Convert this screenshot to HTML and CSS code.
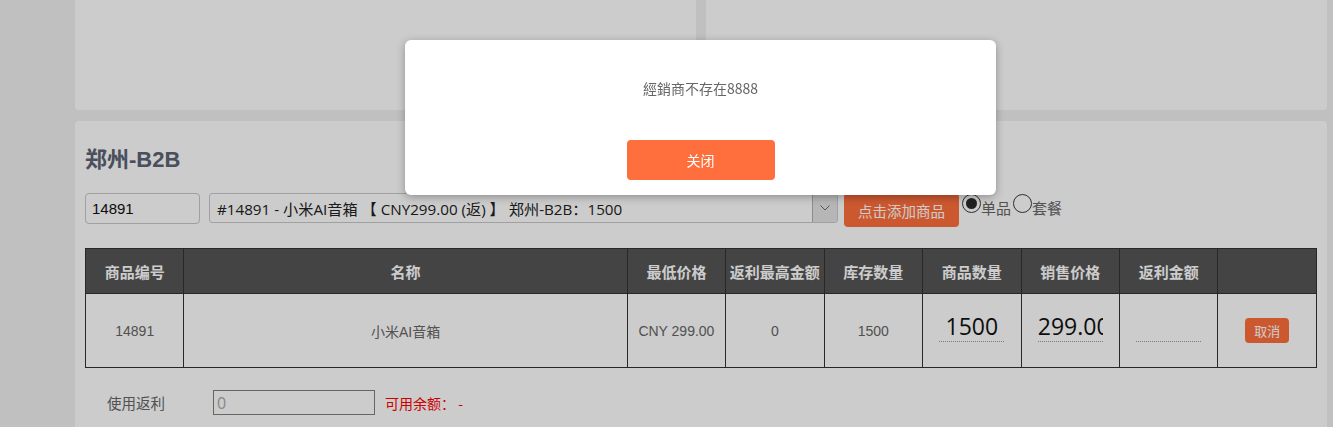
FILE: index.html
```html
<!DOCTYPE html>
<html lang="zh-CN">
<head>
<meta charset="utf-8">
<title>郑州-B2B</title>
<link rel="stylesheet" href="styles.css">
</head>
<body>
<div class="page">
  <div class="top-grid">
    <div class="panel top-panel"></div>
    <div class="panel top-panel"></div>
  </div>
  <div class="panel main-panel">
    <h2 class="title">郑州-B2B</h2>
    <div class="controls">
      <input class="code-input" type="text" value="14891">
      <div class="select">
        <span class="select-text">#14891 - 小米AI音箱 【 CNY299.00 (返) 】 郑州-B2B：1500</span>
        <span class="select-arrow"><svg width="10" height="6" viewBox="0 0 10 6"><polyline points="0.5,0.5 5,5 9.5,0.5" fill="none" stroke="#6a6a6a" stroke-width="1"/></svg></span>
      </div>
      <button class="btn add-btn" type="button">点击添加商品</button>
      <label class="radio"><span class="radio-dot checked"></span><span class="radio-text">单品</span></label>
      <label class="radio"><span class="radio-dot"></span><span class="radio-text">套餐</span></label>
    </div>
    <table class="goods">
      <colgroup>
        <col class="c8"><col class="c36"><col class="c8"><col class="c8"><col class="c8"><col class="c8"><col class="c8"><col class="c8"><col class="c8">
      </colgroup>
      <thead>
        <tr>
          <th>商品编号</th><th>名称</th><th>最低价格</th><th>返利最高金额</th><th>库存数量</th><th>商品数量</th><th>销售价格</th><th>返利金额</th><th></th>
        </tr>
      </thead>
      <tbody>
        <tr>
          <td>14891</td>
          <td>小米AI音箱</td>
          <td>CNY 299.00</td>
          <td>0</td>
          <td>1500</td>
          <td><input class="cell-input" type="text" value="1500"></td>
          <td><input class="cell-input" type="text" value="299.00"></td>
          <td><input class="cell-input" type="text" value=""></td>
          <td><button class="btn cancel-btn" type="button">取消</button></td>
        </tr>
      </tbody>
    </table>
    <div class="rebate">
      <span class="rebate-label">使用返利</span>
      <input class="rebate-input" type="text" value="0">
      <span class="balance">可用余额： -</span>
    </div>
  </div>
</div>
<div class="mask"></div>
<div class="modal">
  <p class="modal-msg">經銷商不存在8888</p>
  <button class="modal-btn" type="button">关闭</button>
</div>
</body>
</html>
```

FILE: styles.css
```css
html, body {
  margin: 0;
  padding: 0;
  overflow: hidden;
  height: 100%;
}
body {
  background: #f0f0f0;
  font-family: "Liberation Sans", "Noto Sans CJK SC", sans-serif;
  color: #666;
}
.page {
  padding: 0 6px 0 75px;
}
.top-grid {
  display: grid;
  grid-template-columns: 1fr 1fr;
  gap: 10px;
  height: 110px;
  margin-bottom: 11px;
}
.panel {
  background: #fff;
  border-radius: 4px;
}
.top-panel {
  border-radius: 0 0 4px 4px;
}
.main-panel {
  padding: 24px 10px;
  min-height: 400px;
}
.title {
  margin: 0 0 18px;
  font-size: 22px;
  line-height: 30px;
  font-weight: bold;
  color: #5c6374;
  font-family: "Liberation Sans", "Noto Sans CJK SC", sans-serif;
}
.controls {
  display: flex;
  align-items: flex-start;
  height: 34px;
  margin-bottom: 21px;
}
.code-input {
  box-sizing: border-box;
  width: 115px;
  height: 31px;
  border: 1px solid #c8c8c8;
  border-radius: 4px;
  padding: 0 6px;
  font-family: "Liberation Sans", "Noto Sans CJK SC", sans-serif;
  font-size: 15px;
  color: #111;
  background: #fff;
  margin: 0 9px 0 0;
  outline: none;
}
.select {
  box-sizing: border-box;
  width: 629px;
  height: 30px;
  border: 1px solid #c8c8c8;
  border-radius: 3px;
  display: flex;
  align-items: center;
  background: #fff;
  margin-right: 6px;
}
.select-text {
  flex: 1;
  padding-left: 7px;
  font-family: "Open Sans", "Noto Sans CJK SC", sans-serif;
  font-size: 15.2px;
  color: #222;
  white-space: nowrap;
  overflow: hidden;
}
.select-arrow {
  box-sizing: border-box;
  width: 25px;
  height: 28px;
  background: #e4e4e4;
  border-left: 1px solid #b0b0b0;
  display: flex;
  align-items: center;
  justify-content: center;
  border-radius: 0 2px 2px 0;
}
.btn {
  border: none;
  background: #ff6f3d;
  color: #fff;
  font-family: "Noto Sans CJK SC", sans-serif;
  cursor: pointer;
  padding: 0;
}
.add-btn {
  width: 115px;
  height: 34px;
  border-radius: 4px;
  font-size: 14.5px;
  margin-right: 3px;
}
.radio {
  display: flex;
  align-items: flex-start;
  color: #666;
  font-family: "Noto Sans CJK SC", sans-serif;
  font-size: 15px;
}
.radio-dot {
  box-sizing: border-box;
  width: 19px;
  height: 19px;
  margin-top: 1px;
  border: 1px solid #3a3a3a;
  border-radius: 50%;
  background: #fff;
  display: flex;
  align-items: center;
  justify-content: center;
}
.radio-dot.checked::after {
  content: "";
  width: 11px;
  height: 11px;
  border-radius: 50%;
  background: #2a2a2a;
}
.radio-text {
  line-height: 20px;
  margin-top: 5px;
  margin-right: 2px;
}
.goods {
  width: 1232px;
  table-layout: fixed;
  border-collapse: collapse;
  border: 1px solid #333;
  font-size: 14px;
}
.c8 { width: 8%; }
.c36 { width: 36%; }
.goods th, .goods td {
  border: 1px solid #333;
  text-align: center;
  padding: 0;
}
.goods thead tr { height: 45px; }
.goods tbody tr { height: 74px; }
.goods th {
  background: #555;
  color: #fff;
  font-family: "Noto Sans CJK SC", sans-serif;
  font-size: 15px;
  font-weight: bold;
}
.goods td {
  color: #666;
  font-family: "Liberation Sans", "Noto Sans CJK SC", sans-serif;
  font-size: 14px;
}
.cell-input {
  display: block;
  box-sizing: border-box;
  width: 65px;
  height: 30px;
  margin: 0 auto 8px;
  border: none;
  border-bottom: 1px dotted #999;
  background: transparent;
  text-align: center;
  padding: 0;
  font-family: "Open Sans", sans-serif;
  font-size: 23px;
  color: #111;
  outline: none;
}
.cancel-btn {
  width: 44px;
  height: 25px;
  border-radius: 4px;
  font-size: 13px;
}
.rebate {
  display: flex;
  align-items: center;
  margin-top: 22px;
}
.rebate-label {
  width: 106px;
  padding-left: 22px;
  box-sizing: border-box;
  margin-right: 22px;
  font-family: "Noto Sans CJK SC", sans-serif;
  font-size: 14.5px;
  color: #666;
}
.rebate-input {
  box-sizing: border-box;
  width: 162px;
  height: 25px;
  border: 1px solid #808080;
  background: #fff;
  padding: 0 3px;
  font-family: "Open Sans", sans-serif;
  font-size: 16px;
  color: #aaa;
  margin-right: 10px;
  outline: none;
}
.balance {
  color: #ff0000;
  font-family: "Noto Sans CJK SC", sans-serif;
  font-size: 14px;
}
.mask {
  position: fixed;
  inset: 0;
  background: rgba(0, 0, 0, 0.2);
}
.modal {
  position: absolute;
  left: 405px;
  top: 40px;
  width: 591px;
  height: 155px;
  box-sizing: border-box;
  background: #fff;
  border-radius: 6px;
  box-shadow: 0 2px 8px rgba(0, 0, 0, 0.3);
  padding-top: 38px;
  text-align: center;
}
.modal-msg {
  margin: 0;
  line-height: 20px;
  font-family: "Noto Sans CJK SC", sans-serif;
  font-size: 14px;
  color: #666;
}
.modal-btn {
  margin-top: 42px;
  width: 148px;
  height: 40px;
  border: none;
  border-radius: 4px;
  background: #ff6f3d;
  color: #fff;
  font-family: "Noto Sans CJK SC", sans-serif;
  font-size: 14px;
  padding: 0;
}
```
